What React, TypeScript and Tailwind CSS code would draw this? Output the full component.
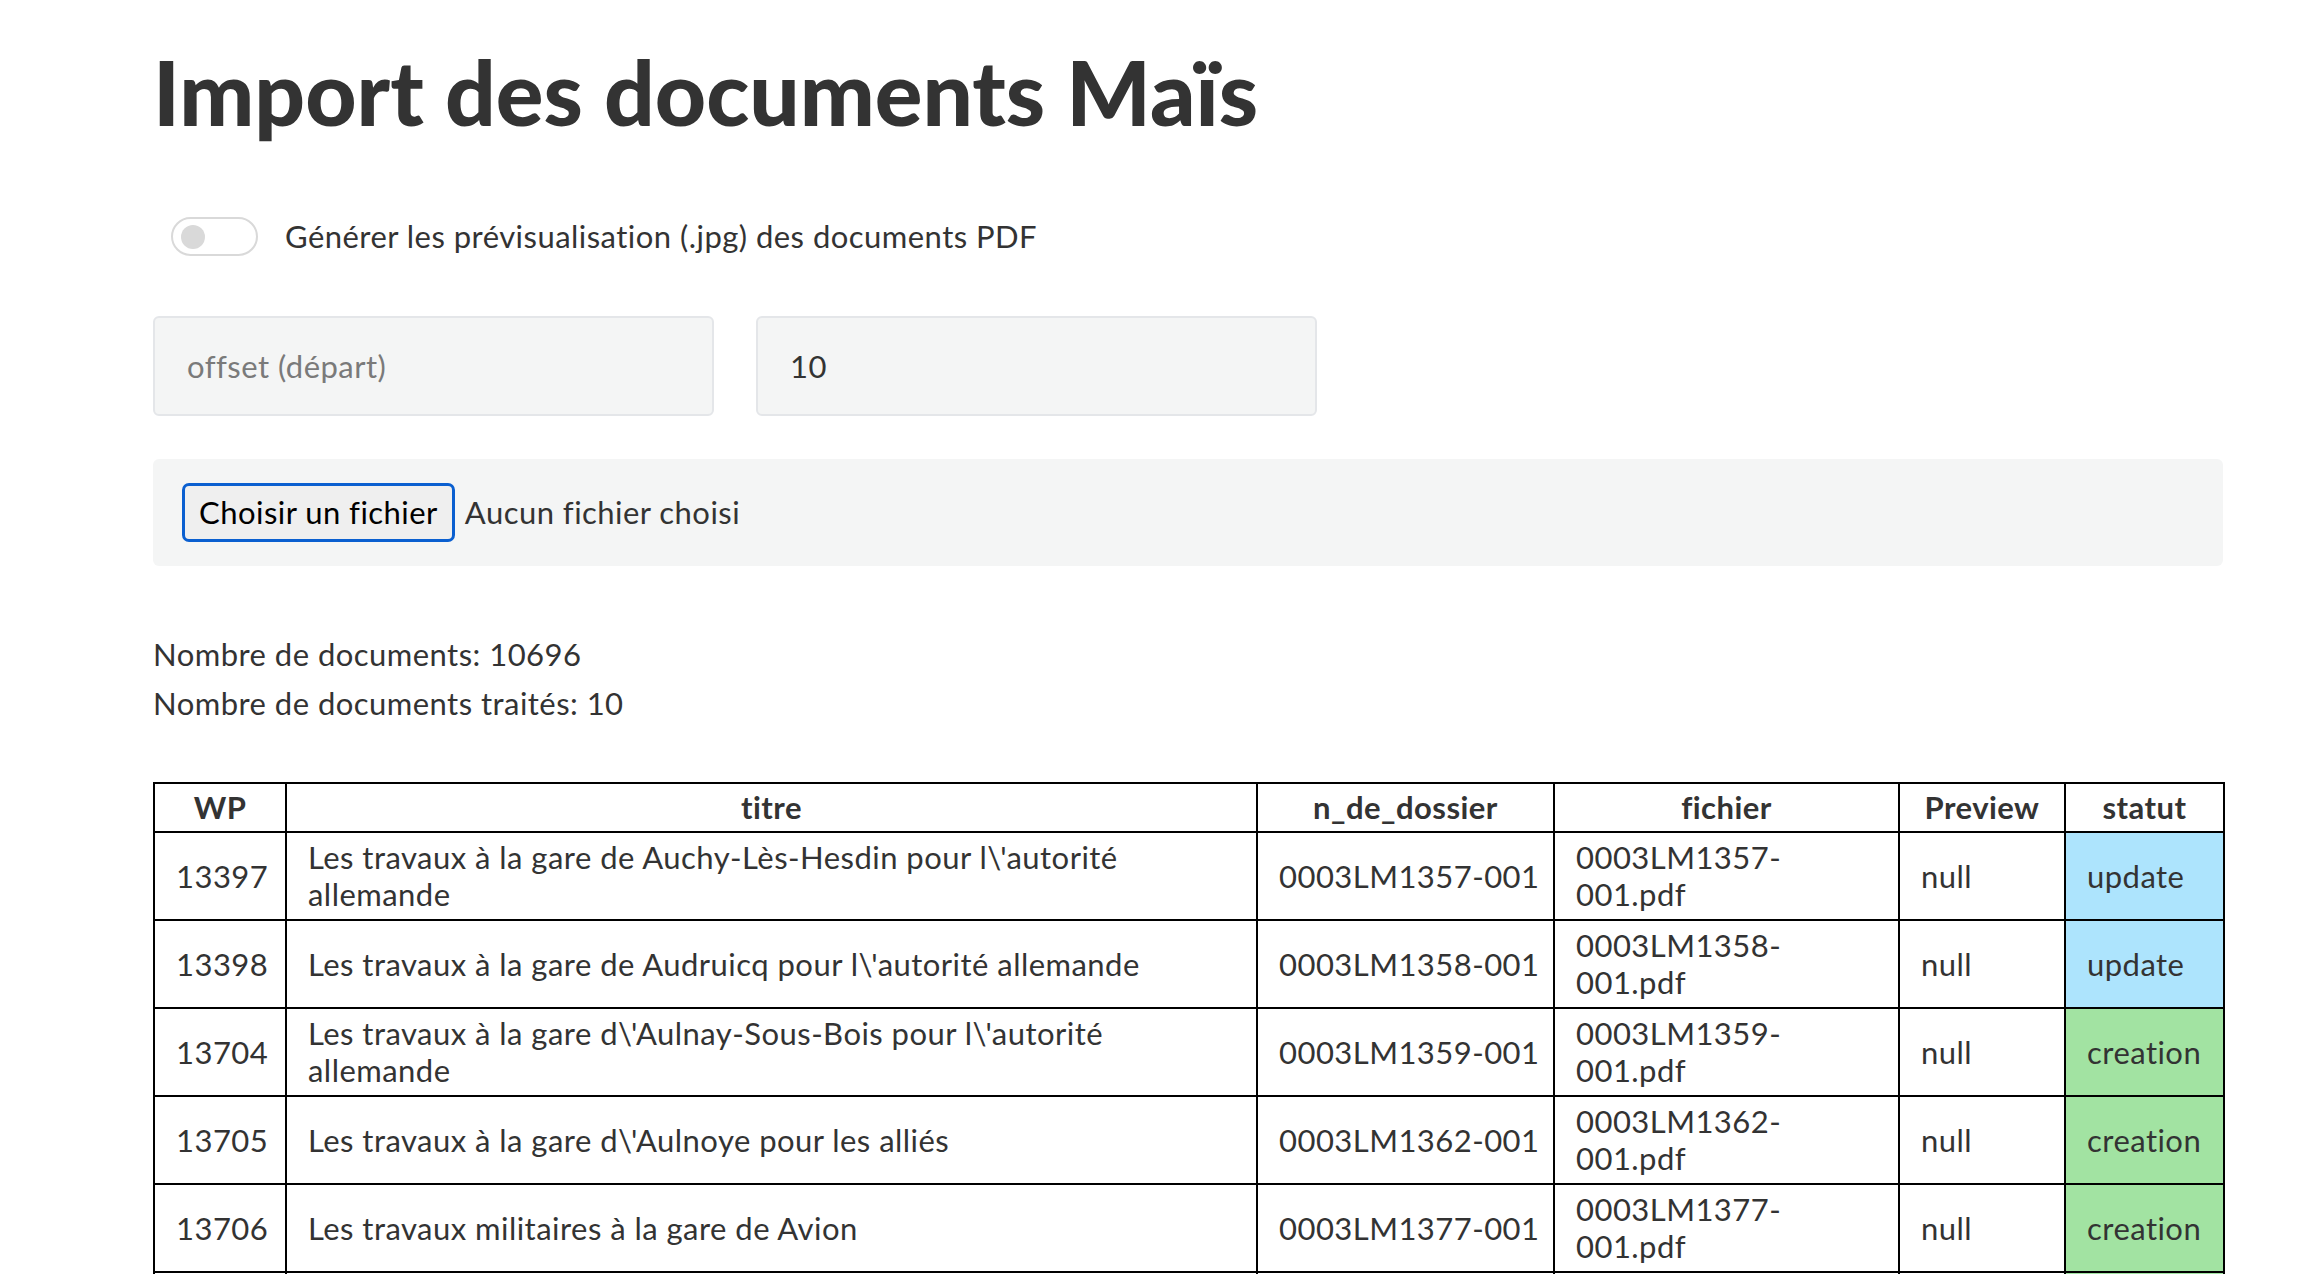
import React from "react"

type Row = {
  wp: string
  titre: React.ReactNode
  dossier: string
  fichier: React.ReactNode
  preview: string
  statut: "update" | "creation"
}

const rows: Row[] = [
  {
    wp: "13397",
    titre: (
      <>
        Les travaux à la gare de Auchy-Lès-Hesdin pour l\'autorité
        <br />
        allemande
      </>
    ),
    dossier: "0003LM1357-001",
    fichier: (
      <>
        0003LM1357-
        <br />
        001.pdf
      </>
    ),
    preview: "null",
    statut: "update",
  },
  {
    wp: "13398",
    titre: "Les travaux à la gare de Audruicq pour l\\'autorité allemande",
    dossier: "0003LM1358-001",
    fichier: (
      <>
        0003LM1358-
        <br />
        001.pdf
      </>
    ),
    preview: "null",
    statut: "update",
  },
  {
    wp: "13704",
    titre: (
      <>
        Les travaux à la gare d\'Aulnay-Sous-Bois pour l\'autorité
        <br />
        allemande
      </>
    ),
    dossier: "0003LM1359-001",
    fichier: (
      <>
        0003LM1359-
        <br />
        001.pdf
      </>
    ),
    preview: "null",
    statut: "creation",
  },
  {
    wp: "13705",
    titre: "Les travaux à la gare d\\'Aulnoye pour les alliés",
    dossier: "0003LM1362-001",
    fichier: (
      <>
        0003LM1362-
        <br />
        001.pdf
      </>
    ),
    preview: "null",
    statut: "creation",
  },
  {
    wp: "13706",
    titre: "Les travaux militaires à la gare de Avion",
    dossier: "0003LM1377-001",
    fichier: (
      <>
        0003LM1377-
        <br />
        001.pdf
      </>
    ),
    preview: "null",
    statut: "creation",
  },
  {
    wp: "13707",
    titre: "Les travaux à la gare de Bapaume pour l\\'autorité allemande",
    dossier: "0003LM1393-001",
    fichier: (
      <>
        0003LM1393-
        <br />
        001.pdf
      </>
    ),
    preview: "null",
    statut: "creation",
  },
]

const cell = "border-2 border-black px-[21px] h-[88px] align-middle"

export default function App() {
  return (
    <div
      className="min-h-screen bg-white pl-[153px] text-[#333] text-[31px] leading-[37px] tracking-[0.015em]"
      style={{ fontFamily: "Lato, 'Noto Sans', sans-serif" }}
    >
      <div className="w-[2070px]">
        <h1 className="pt-[39px] text-[89px] leading-[106px] font-black tracking-normal text-[#333]">
          Import des documents Maïs
        </h1>

        {/* toggle */}
        <div className="mt-[72px] flex items-center gap-[27px] pl-[18px]">
          <div className="flex h-[39px] w-[87px] items-center rounded-full border-2 border-[#d9d9d9] bg-white pl-[8px]">
            <span className="h-[24px] w-[24px] rounded-full bg-[#d9d9d9]" />
          </div>
          <span>Générer les prévisualisation (.jpg) des documents PDF</span>
        </div>

        {/* offset / limit */}
        <div className="mt-[60px] flex gap-[42px]">
          <input
            className="h-[100px] w-[561px] rounded-[6px] border-2 border-[#e4e6e9] bg-[#f4f5f5] px-[32px] text-[31px] text-[#333] placeholder:text-[#7a7a7a] outline-none"
            placeholder="offset (départ)"
          />
          <input
            className="h-[100px] w-[561px] rounded-[6px] border-2 border-[#e4e6e9] bg-[#f4f5f5] px-[32px] text-[31px] text-[#333] outline-none"
            defaultValue="10"
          />
        </div>

        {/* file picker */}
        <div className="mt-[43px] flex h-[107px] items-center gap-[10px] rounded-[6px] bg-[#f4f5f5] pl-[29px]">
          <span className="flex h-[59px] items-center rounded-[7px] border-[3px] border-[#0a5fd0] bg-[#efefef] px-[14px] text-black">
            Choisir un fichier
          </span>
          <span className="text-[#333]">Aucun fichier choisi</span>
        </div>

        <div className="mt-[64px] leading-[49px]">
          <p>Nombre de documents: 10696</p>
          <p>Nombre de documents traités: 10</p>
        </div>

        <table className="mt-[54px] w-[2070px] table-fixed border-collapse border-2 border-black">
          <colgroup>
            <col className="w-[132px]" />
            <col className="w-[971px]" />
            <col className="w-[297px]" />
            <col className="w-[345px]" />
            <col className="w-[166px]" />
            <col className="w-[159px]" />
          </colgroup>
          <thead>
            <tr>
              {["WP", "titre", "n_de_dossier", "fichier", "Preview", "statut"].map((h) => (
                <th key={h} className="h-[49px] border-2 border-black text-center font-bold">
                  {h}
                </th>
              ))}
            </tr>
          </thead>
          <tbody>
            {rows.map((r) => (
              <tr key={r.wp}>
                <td className={cell}>{r.wp}</td>
                <td className={cell}>{r.titre}</td>
                <td className={cell + " whitespace-nowrap"}>{r.dossier}</td>
                <td className={cell}>{r.fichier}</td>
                <td className={cell}>{r.preview}</td>
                <td
                  className={
                    r.statut === "update"
                      ? cell + " bg-[#ade4fd]"
                      : cell + " bg-[#a2e3a2]"
                  }
                >
                  {r.statut}
                </td>
              </tr>
            ))}
          </tbody>
        </table>
      </div>
    </div>
  )
}
